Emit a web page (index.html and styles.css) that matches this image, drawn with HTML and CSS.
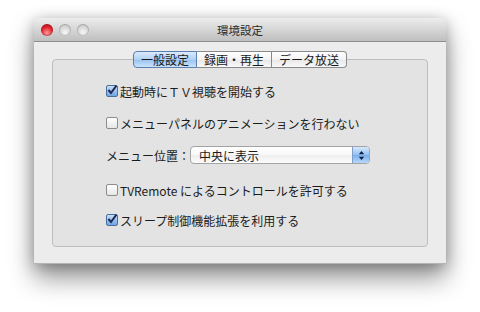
FILE: index.html
```html
<!DOCTYPE html>
<html lang="ja">
<head>
  <meta charset="UTF-8">
  <title>環境設定</title>
  <link rel="stylesheet" href="styles.css">
</head>
<body>
<div class="window">
  <div class="titlebar">
    <div class="lights">
      <span class="light red"></span>
      <span class="light"></span>
      <span class="light"></span>
    </div>
    <div class="title">環境設定</div>
  </div>
  <div class="content">
    <div class="tabs">
      <span class="tab active">一般設定</span>
      <span class="tab">録画・再生</span>
      <span class="tab">データ放送</span>
    </div>
    <div class="tabbox">
      <label class="row">
        <span class="check on"><svg width="12" height="12" viewBox="0 0 12 12"><path d="M2.4 6 L5 9 L10.4 1.6" fill="none" stroke="#1b2a55" stroke-width="2"/></svg></span>
        起動時にＴＶ視聴を開始する
      </label>
      <label class="row">
        <span class="check"></span>
        メニューパネルのアニメーションを行わない
      </label>
      <div class="row popup-row">
        <span class="popup-label">メニュー位置：</span>
        <div class="popup">
          <span class="popup-text">中央に表示</span>
          <span class="stepper">
            <svg width="7" height="11" viewBox="0 0 7 11"><path d="M3.5 1 L6.2 4.3 H0.8 Z M3.5 10 L6.2 6.7 H0.8 Z" fill="#10204a"/></svg>
          </span>
        </div>
      </div>
      <label class="row row-short">
        <span class="check"></span>
        TVRemote によるコントロールを許可する
      </label>
      <label class="row row-last">
        <span class="check on"><svg width="12" height="12" viewBox="0 0 12 12"><path d="M2.4 6 L5 9 L10.4 1.6" fill="none" stroke="#1b2a55" stroke-width="2"/></svg></span>
        スリープ制御機能拡張を利用する
      </label>
    </div>
  </div>
</div>
</body>
</html>
```

FILE: styles.css
```css
html, body {
  min-height: 312px;
}
body {
  margin: 0;
  padding: 18px 0 48px 34px;
  box-sizing: border-box;
  background-color: #ffffff;
  font-family: "Noto Sans CJK JP", "DejaVu Sans", sans-serif;
  font-size: 12px;
  color: #1c1c1c;
}
.window {
  width: 412px;
  height: 246px;
  background-color: #ececec;
  border-radius: 5px 5px 0 0;
  border-bottom: 1px solid #b4b4b4;
  box-sizing: border-box;
  box-shadow: 0 14px 26px rgba(0,0,0,0.42), 0 2px 14px rgba(0,0,0,0.25);
  display: flex;
  flex-direction: column;
}
.titlebar {
  height: 23px;
  display: flex;
  align-items: center;
  padding: 0 7px;
  border-radius: 5px 5px 0 0;
  background: linear-gradient(#ededed, #d6d6d6 50%, #bfbfbf);
  border-bottom: 1px solid #8e8e8e;
  position: relative;
}
.lights {
  display: flex;
  gap: 6px;
}
.light {
  width: 12px;
  height: 12px;
  border-radius: 50%;
  background: radial-gradient(circle at 50% 70%, #f7f7f7, #d2d2d2 60%, #b0b0b0);
  box-shadow: inset 0 0 0 1px rgba(0,0,0,0.15);
}
.light.red {
  background: radial-gradient(circle at 50% 75%, #ff9a9a, #e0212a 55%, #9d0e13);
}
.title {
  position: absolute;
  left: 0;
  right: 0;
  text-align: center;
  font-size: 11.5px;
  color: #2a2a2a;
  pointer-events: none;
}
.content {
  flex: 1;
  padding: 9px 18px 16px;
  display: flex;
  flex-direction: column;
}
.tabs {
  display: flex;
  justify-content: center;
  position: relative;
  z-index: 1;
}
.tab {
  height: 15px;
  line-height: 15px;
  padding: 0 7px;
  border: 1px solid #8a8a8a;
  border-left: none;
  background: linear-gradient(#ffffff, #f3f3f3 50%, #e7e7e7 51%, #f9f9f9);
  color: #1a1a1a;
}
.tab:first-child {
  border-left: 1px solid #8a8a8a;
  border-radius: 4px 0 0 4px;
}
.tab:last-child {
  border-radius: 0 4px 4px 0;
}
.tab.active {
  background: linear-gradient(#dbeafb, #b0d1f5 50%, #96c1f0 51%, #cce3fb);
  border-color: #5b7fae;
}
.tabbox {
  flex: 1;
  margin-top: -9px;
  border: 1px solid #bdbdbd;
  border-radius: 4px;
  background-color: #e3e3e3;
  padding: 21px 0 0 53px;
}
.row {
  display: flex;
  align-items: center;
  height: 20px;
  margin-bottom: 12px;
}
.check {
  width: 12px;
  height: 12px;
  margin-right: 2px;
  border: 1px solid #8c8c8c;
  border-radius: 2px;
  background: linear-gradient(#ffffff, #e6e6e6);
  box-sizing: border-box;
  position: relative;
}
.check.on {
  border-color: #4c6e9e;
  background: linear-gradient(#c9def6, #6fa4e2);
}
.check svg {
  position: absolute;
  left: -1px;
  top: -2px;
}
.popup-row {
  margin-top: 1px;
  margin-bottom: 15px;
}
.popup-label {
  width: 84px;
}
.popup {
  width: 180px;
  height: 18px;
  box-sizing: border-box;
  border: 1px solid #a3a3a3;
  border-radius: 4px;
  background: linear-gradient(#ffffff, #f8f8f8 50%, #eeeeee 51%, #fcfcfc);
  display: flex;
  align-items: center;
}
.popup-text {
  flex: 1;
  padding-left: 8px;
}
.stepper {
  width: 16px;
  height: 16px;
  border-left: 1px solid #7f9ecb;
  border-radius: 0 3px 3px 0;
  background: linear-gradient(#d8e9fb, #93c0f0 50%, #78b0ec 51%, #b6d8f9);
  display: flex;
  align-items: center;
  justify-content: center;
}
.row-short {
  margin-bottom: 10px;
}
.row-last {
  margin-bottom: 0;
}
```
